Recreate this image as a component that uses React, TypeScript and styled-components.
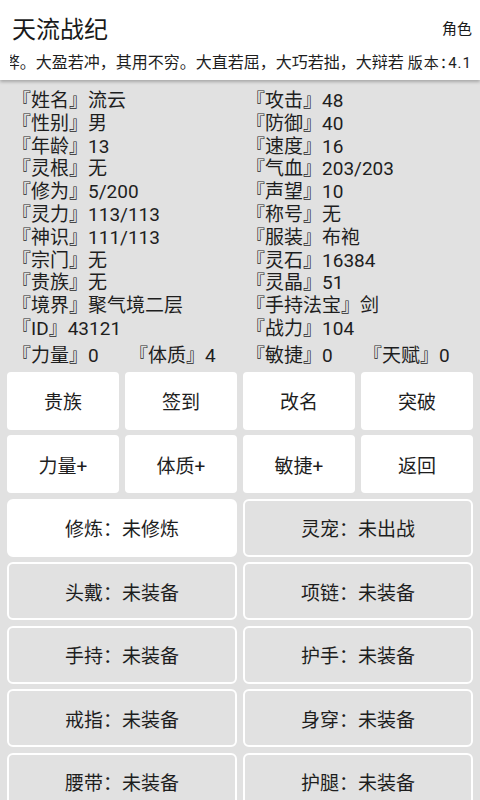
import styled, { createGlobalStyle } from "styled-components";

const GlobalStyle = createGlobalStyle`
  html, body {
    margin: 0;
    padding: 0;
    background: #e1e1e1;
  }
  body {
    font-family: Roboto, "Noto Sans CJK SC", "Noto Sans", sans-serif;
    color: #1e1e1e;
  }
`;

const Page = styled.div`
  width: 480px;
  min-height: 800px;
  background: #e1e1e1;
  overflow: hidden;
`;

const Header = styled.header`
  height: 80px;
  background: #fff;
  box-shadow: 0 2px 3px rgba(0, 0, 0, 0.25);
  display: flex;
  flex-direction: column;
  position: relative;
`;

const TitleBar = styled.div`
  height: 46px;
  display: flex;
  align-items: center;
  justify-content: space-between;
  padding: 8px 8px 0 12px;
  box-sizing: border-box;
`;

const Title = styled.h1`
  margin: 0;
  font-size: 24px;
  font-weight: 400;
  color: #1a1a1a;
`;

const MenuItem = styled.span`
  font-size: 15px;
  color: #1a1a1a;
`;

const NoticeBar = styled.div`
  height: 30px;
  display: flex;
  align-items: center;
  padding: 0 8px 0 10px;
  font-size: 16px;
  text-spacing-trim: space-all;
`;

/* scrolling notice, frozen mid-scroll: overflow runs off the left edge */
const Marquee = styled.div`
  flex: 1;
  min-width: 0;
  display: flex;
  justify-content: flex-end;
  overflow: hidden;
  white-space: nowrap;
  margin-right: 4px;
`;

const MarqueeText = styled.span`
  flex: none;
`;

const Version = styled.span`
  white-space: nowrap;
  font-size: 15px;
  letter-spacing: 1px;
  font-feature-settings: "halt";
`;

const Stats = styled.section`
  display: grid;
  grid-template-columns: 1fr 1fr;
  padding: 10px 0 0 12px;
  font-size: 19px;
  line-height: 22.8px;
`;

const Stat = styled.div`
  white-space: nowrap;
`;

const AttrRow = styled.div`
  display: grid;
  grid-template-columns: repeat(4, 1fr);
  padding: 4px 0 0 12px;
  font-size: 19px;
  line-height: 22.8px;
`;

const Panel = styled.div`
  display: flex;
  flex-direction: column;
  gap: 5.5px;
  padding: 4px 7px 0;
`;

const Grid = styled.div<{ $cols: number }>`
  display: grid;
  grid-template-columns: repeat(${(p) => p.$cols}, 1fr);
  column-gap: 6px;
  row-gap: 5.5px;
`;

const ActionButton = styled.button`
  height: 58px;
  border: none;
  border-radius: 4px;
  background: #fff;
  font-family: inherit;
  font-size: 19px;
  color: #1e1e1e;
  padding: 0;
`;

const SlotButton = styled.button<{ $active?: boolean }>`
  height: 58px;
  border: 2px solid #fff;
  border-radius: 6px;
  background: ${(p) => (p.$active ? "#fff" : "#e1e1e1")};
  font-family: inherit;
  font-size: 19px;
  color: #1e1e1e;
  padding: 0;
`;

const leftStats = [
  ["姓名", "流云"],
  ["性别", "男"],
  ["年龄", "13"],
  ["灵根", "无"],
  ["修为", "5/200"],
  ["灵力", "113/113"],
  ["神识", "111/113"],
  ["宗门", "无"],
  ["贵族", "无"],
  ["境界", "聚气境二层"],
  ["ID", "43121"],
];

const rightStats = [
  ["攻击", "48"],
  ["防御", "40"],
  ["速度", "16"],
  ["气血", "203/203"],
  ["声望", "10"],
  ["称号", "无"],
  ["服装", "布袍"],
  ["灵石", "16384"],
  ["灵晶", "51"],
  ["手持法宝", "剑"],
  ["战力", "104"],
];

const attrs = [
  ["力量", "0"],
  ["体质", "4"],
  ["敏捷", "0"],
  ["天赋", "0"],
];

const actions = ["贵族", "签到", "改名", "突破", "力量+", "体质+", "敏捷+", "返回"];

const slots = [
  ["修炼", "未修炼"],
  ["灵宠", "未出战"],
  ["头戴", "未装备"],
  ["项链", "未装备"],
  ["手持", "未装备"],
  ["护手", "未装备"],
  ["戒指", "未装备"],
  ["身穿", "未装备"],
  ["腰带", "未装备"],
  ["护腿", "未装备"],
];

export default function App() {
  const rows = leftStats.flatMap((l, i) => [l, rightStats[i]]);
  return (
    <Page>
      <GlobalStyle />
      <Header>
        <TitleBar>
          <Title>天流战纪</Title>
          <MenuItem>角色</MenuItem>
        </TitleBar>
        <NoticeBar>
          <Marquee>
            <MarqueeText>大成若缺，其用不弊。大盈若冲，其用不穷。大直若屈，大巧若拙，大辩若</MarqueeText>
          </Marquee>
          <Version>版本：4.1</Version>
        </NoticeBar>
      </Header>
      <Stats>
        {rows.map(([k, v], i) => (
          <Stat key={i}>
            『{k}』{v}
          </Stat>
        ))}
      </Stats>
      <AttrRow>
        {attrs.map(([k, v]) => (
          <Stat key={k}>
            『{k}』{v}
          </Stat>
        ))}
      </AttrRow>
      <Panel>
        <Grid $cols={4}>
          {actions.map((a) => (
            <ActionButton key={a}>{a}</ActionButton>
          ))}
        </Grid>
        <Grid $cols={2}>
          {slots.map(([k, v], i) => (
            <SlotButton key={k} $active={i === 0}>
              {k}：{v}
            </SlotButton>
          ))}
        </Grid>
      </Panel>
    </Page>
  );
}
